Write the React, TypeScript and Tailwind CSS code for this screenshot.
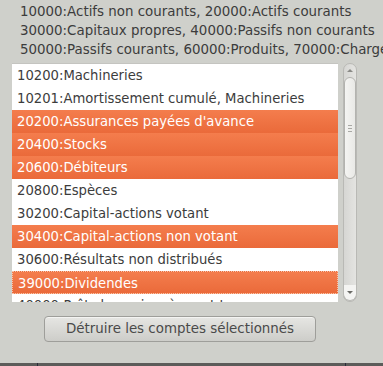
import React from "react";

const rows: { label: string; selected?: boolean; focus?: boolean }[] = [
  { label: "10200:Machineries" },
  { label: "10201:Amortissement cumulé, Machineries" },
  { label: "20200:Assurances payées d'avance", selected: true },
  { label: "20400:Stocks", selected: true },
  { label: "20600:Débiteurs", selected: true },
  { label: "20800:Espèces" },
  { label: "30200:Capital-actions votant" },
  { label: "30400:Capital-actions non votant", selected: true },
  { label: "30600:Résultats non distribués" },
  { label: "39000:Dividendes", selected: true, focus: true },
  { label: "40000:Prêts bancaires à court terme" },
];

const header = [
  "10000:Actifs non courants, 20000:Actifs courants",
  "30000:Capitaux propres, 40000:Passifs non courants",
  "50000:Passifs courants, 60000:Produits, 70000:Charges",
];

const Scrollbar: React.FC = () => (
  <div className="relative w-[14px] h-[239px] rounded-full border border-[#b9b9b5] bg-gradient-to-r from-[#d6d6d3] to-[#e4e4e1]">
    <div className="flex justify-center pt-[5px]">
      <div className="w-0 h-0 border-l-[3px] border-r-[3px] border-b-[3px] border-l-transparent border-r-transparent border-b-[#8a8a86]" />
    </div>
    <div className="absolute left-[0px] top-[13px] w-[12px] h-[102px] rounded-full border border-[#b3b3af] bg-gradient-to-r from-[#f4f4f2] to-[#e9e9e6] flex flex-col items-center justify-center gap-[2px]">
      <div className="w-[4px] h-px bg-[#a9a9a5]" />
      <div className="w-[4px] h-px bg-[#a9a9a5]" />
      <div className="w-[4px] h-px bg-[#a9a9a5]" />
    </div>
    <div className="absolute bottom-0 left-[-1px] w-[14px] h-[16px] rounded-b-full border border-t-0 border-[#b9b9b5] bg-[#f4f4f2] flex justify-center pt-[6px]">
      <div className="w-0 h-0 border-l-[3px] border-r-[3px] border-t-[3px] border-l-transparent border-r-transparent border-t-[#6a6a66]" />
    </div>
  </div>
);

const App: React.FC = () => {
  return (
    <div
      className="w-[383px] h-[366px] bg-[#cfd0cb] overflow-hidden flex flex-col"
      style={{ fontFamily: "'DejaVu Sans', sans-serif" }}
    >
      <div className="pl-5 pt-[2px] text-[13.4px] leading-[19px] text-[#3c3c3c] whitespace-nowrap">
        {header.map((h) => (
          <div key={h}>{h}</div>
        ))}
      </div>
      <div className="flex items-start ml-3 mt-[4px] gap-[5px]">
        <div className="w-[326px] h-[239px] bg-white overflow-hidden border-t border-[#c4c4c0]">
          {rows.map((r) => (
            <div
              key={r.label}
              className={
                r.selected
                  ? "h-[23px] pl-[5px] leading-[23px] text-[13.2px] whitespace-nowrap text-white bg-gradient-to-b from-[#f47d4d] to-[#ea6a3a]" +
                    (r.focus ? " border border-dotted border-[#f8c3a8] pl-[4px] leading-[21px]" : "")
                  : "h-[23px] pl-[5px] leading-[23px] text-[13.2px] whitespace-nowrap text-[#3c3c3c]"
              }
            >
              {r.label}
            </div>
          ))}
        </div>
        <Scrollbar />
      </div>
      <div className="flex mt-[14px] ml-[44px]">
        <button className="w-[272px] h-[26px] rounded-[4px] border border-[#9e9e9a] bg-gradient-to-b from-[#e6e6e3] to-[#cdcdc9] text-[13.4px] text-[#4a4a4a] shadow-[inset_0_1px_0_#f4f4f2]">
          Détruire les comptes sélectionnés
        </button>
      </div>
      <div className="mt-auto h-[3px] bg-[#5c5c5a] flex justify-between px-[37px]">
        <div className="w-px h-[3px] bg-[#2a2a3a]" />
        <div className="w-px h-[3px] bg-[#2a2a3a]" />
      </div>
    </div>
  );
};

export default App;
